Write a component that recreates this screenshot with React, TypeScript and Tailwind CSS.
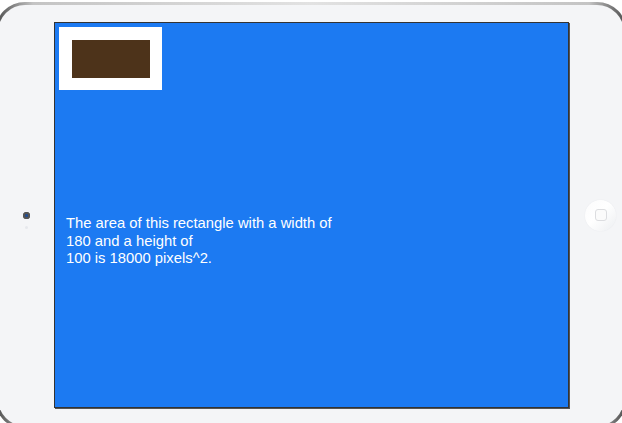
export default function App() {
  return (
    <div className="w-[622px] h-[423px] overflow-hidden bg-white font-['Liberation_Sans',Arial,sans-serif]">
      {/* Device frame */}
      <div className="ml-[-5px] mt-[2px] w-[632px] h-[427px] rounded-[30px] p-[3px] bg-[linear-gradient(to_right,#4a4a4a,#c4c4c4_6%,#e2e2e2_50%,#c4c4c4_94%,#4a4a4a)]">
        <div className="flex h-full items-start rounded-[27px] bg-[#f4f5f7] pt-[17px]">
          {/* Camera */}
          <div className="flex h-[386px] w-[56px] flex-col items-center justify-center gap-[7px] pt-[10px]">
            <div className="h-[7px] w-[7px] rounded-full bg-[#3d4450] shadow-[inset_0_0_0_2px_#555]">
              <div className="m-[2px] h-[3px] w-[3px] rounded-full bg-[#1f4f9a]" />
            </div>
            <div className="h-[3px] w-[3px] rounded-full bg-[#e6e8ec]" />
          </div>

          {/* Screen */}
          <div className="h-[386px] w-[515px] border border-[#333] bg-[#1c7af2] p-[4px] shadow-[1px_1px_0_#555]">
            <div className="flex h-[63px] w-[103px] items-center justify-center bg-white">
              <div className="h-[38px] w-[78px] bg-[#4d331a]" />
            </div>
            <p className="ml-[7px] mt-[125px] text-[14.8px] leading-[17.5px] text-white">
              The area of this rectangle with a width of
              <br />
              180 and a height of
              <br />
              100 is 18000 pixels^2.
            </p>
          </div>

          {/* Home button */}
          <div className="flex h-[386px] items-center pl-[16px]">
            <div className="flex h-[31px] w-[31px] items-center justify-center rounded-full bg-[linear-gradient(135deg,#fbfbfc,#ffffff_45%,#eceef1)] shadow-[0_0_1px_#dcdfe4]">
              <div className="h-[12px] w-[12px] rounded-[3px] border border-[#dcdde0] bg-[#fbfbfb]" />
            </div>
          </div>
        </div>
      </div>
    </div>
  );
}
